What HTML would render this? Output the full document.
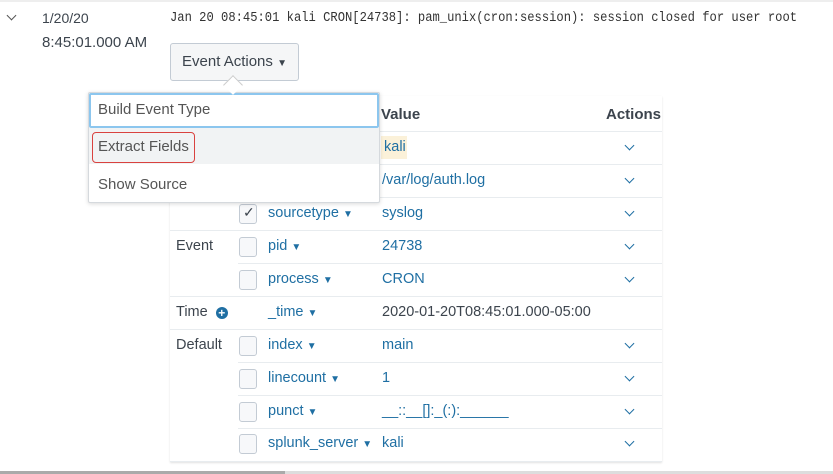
<!DOCTYPE html>
<html><head><meta charset="utf-8"><style>
*{margin:0;padding:0;box-sizing:border-box}
body{width:833px;height:474px;background:#fff;position:relative;overflow:hidden;font-family:"Liberation Sans",sans-serif;font-size:14.5px;color:#3c444d}
.a{position:absolute;white-space:nowrap}
.l{color:#1f6fa3}
.hl{position:absolute;height:1px;background:#e8ecef}
.cb{position:absolute;width:18px;height:20px;border:1px solid #c3cbd4;border-radius:3px;background:#f7f8fa}
.car{font-size:10px}
.chev{position:absolute;width:7px;height:7px;border-right:1.5px solid #1f6fa3;border-bottom:1.5px solid #1f6fa3;transform:rotate(45deg)}
</style></head><body>
<div class="a" style="left:0;top:0;width:833px;height:2px;background:#eee"></div>
<div class="chev" style="left:8px;top:12px;border-color:#555"></div>
<div class="a" style="left:42px;top:10px;font-size:14px">1/20/20</div>
<div class="a" style="left:42px;top:34px;font-size:15px">8:45:01.000 AM</div>
<div class="a" style="left:170px;top:11px;font-family:'Liberation Mono',monospace;font-size:13.5px;color:#333;transform:scaleX(0.9);transform-origin:0 0">Jan 20 08:45:01 kali CRON[24738]: pam_unix(cron:session): session closed for user root</div>
<div class="a" style="left:170px;top:43px;width:129px;height:38px;border:1px solid #c3cbd4;border-radius:3px;background:#f5f6f7;text-align:center;line-height:36px;font-size:15px">Event Actions <span class="car">▼</span></div>
<div class="a" style="left:226px;top:78px;width:14px;height:14px;background:#fff;border-left:1px solid #ccc;border-top:1px solid #ccc;transform:rotate(45deg);z-index:3"></div>

<div class="a" style="left:170px;top:96px;width:492px;height:366px;box-shadow:0 1px 2px rgba(0,0,0,.12)"></div>
<div class="a" style="left:381px;top:106px;font-weight:bold;font-size:15px">Value</div>
<div class="a" style="left:606px;top:106px;font-weight:bold;font-size:15px">Actions</div>
<div class="hl" style="left:170px;width:492px;top:131px"></div>
<div class="hl" style="left:238px;width:424px;top:164px"></div>
<div class="hl" style="left:238px;width:424px;top:197px"></div>
<div class="hl" style="left:170px;width:492px;top:230px"></div>
<div class="hl" style="left:238px;width:424px;top:263px"></div>
<div class="hl" style="left:170px;width:492px;top:296px"></div>
<div class="hl" style="left:170px;width:492px;top:329px"></div>
<div class="hl" style="left:238px;width:424px;top:362px"></div>
<div class="hl" style="left:238px;width:424px;top:395px"></div>
<div class="hl" style="left:238px;width:424px;top:428px"></div>
<div class="hl" style="left:170px;width:492px;top:461px"></div>

<div class="a" style="left:381px;top:136px;width:26px;height:23px;background:#fbf1d9"></div>
<div class="a l" style="left:384px;top:139px">kali</div>
<div class="a l" style="left:382px;top:172px">/var/log/auth.log</div>

<div class="cb" style="left:239px;top:204px"></div><div class="a" style="left:243px;top:204px;font-size:14px">✓</div>
<div class="a l" style="left:268px;top:205px">sourcetype <span class="car">▼</span></div><div class="a l" style="left:382px;top:205px">syslog</div>

<div class="a" style="left:176px;top:238px">Event</div>
<div class="cb" style="left:239px;top:237px"></div><div class="a l" style="left:268px;top:238px">pid <span class="car">▼</span></div><div class="a l" style="left:382px;top:238px">24738</div>
<div class="cb" style="left:239px;top:270px"></div><div class="a l" style="left:268px;top:271px">process <span class="car">▼</span></div><div class="a l" style="left:382px;top:271px">CRON</div>
<div class="a" style="left:176px;top:304px">Time &nbsp;<span style="display:inline-block;width:12px;height:12px;border-radius:50%;background:#1f6fa3;color:#fff;font-size:12px;line-height:12px;text-align:center;font-weight:bold;vertical-align:-1px">+</span></div>
<div class="a l" style="left:268px;top:304px">_time <span class="car">▼</span></div><div class="a" style="left:382px;top:304px">2020-01-20T08:45:01.000-05:00</div>
<div class="a" style="left:176px;top:337px">Default</div>
<div class="cb" style="left:239px;top:336px"></div><div class="a l" style="left:268px;top:337px">index <span class="car">▼</span></div><div class="a l" style="left:382px;top:337px">main</div>
<div class="cb" style="left:239px;top:369px"></div><div class="a l" style="left:268px;top:370px">linecount <span class="car">▼</span></div><div class="a l" style="left:382px;top:370px">1</div>
<div class="cb" style="left:239px;top:402px"></div><div class="a l" style="left:268px;top:403px">punct <span class="car">▼</span></div><div class="a l" style="left:382px;top:403px">__::__[]:_(:):______</div>
<div class="cb" style="left:239px;top:434px"></div><div class="a l" style="left:268px;top:435px">splunk_server <span class="car">▼</span></div><div class="a l" style="left:382px;top:435px">kali</div>

<div class="chev" style="left:626px;top:142px"></div>
<div class="chev" style="left:626px;top:175px"></div>
<div class="chev" style="left:626px;top:208px"></div>
<div class="chev" style="left:626px;top:241px"></div>
<div class="chev" style="left:626px;top:274px"></div>
<div class="chev" style="left:626px;top:340px"></div>
<div class="chev" style="left:626px;top:373px"></div>
<div class="chev" style="left:626px;top:406px"></div>
<div class="chev" style="left:626px;top:438px"></div>

<div class="a" style="left:88px;top:92px;width:292px;height:111px;background:#fff;border:1px solid #d5d9dd;border-radius:2px;box-shadow:0 1px 4px rgba(0,0,0,.15);z-index:2">
<div class="a" style="left:0;top:0;width:290px;height:35px;border:2px solid #8cc6ee;border-radius:2px"></div>
<div class="a" style="left:9px;top:8px;font-size:15px;color:#555">Build Event Type</div>
<div class="a" style="left:0;top:35px;width:290px;height:36px;background:#f1f3f4"></div>
<div class="a" style="left:3px;top:39px;width:103px;height:31px;border:1.5px solid #d9423f;border-radius:4px"></div>
<div class="a" style="left:9px;top:45px;font-size:15px;color:#555">Extract Fields</div>
<div class="a" style="left:9px;top:83px;font-size:15px;color:#555">Show Source</div>
</div>

<div class="a" style="left:0;top:471px;width:833px;height:3px;background:#ddd"></div>
<div class="a" style="left:0;top:471px;width:285px;height:3px;background:#aaa"></div>
</body></html>
